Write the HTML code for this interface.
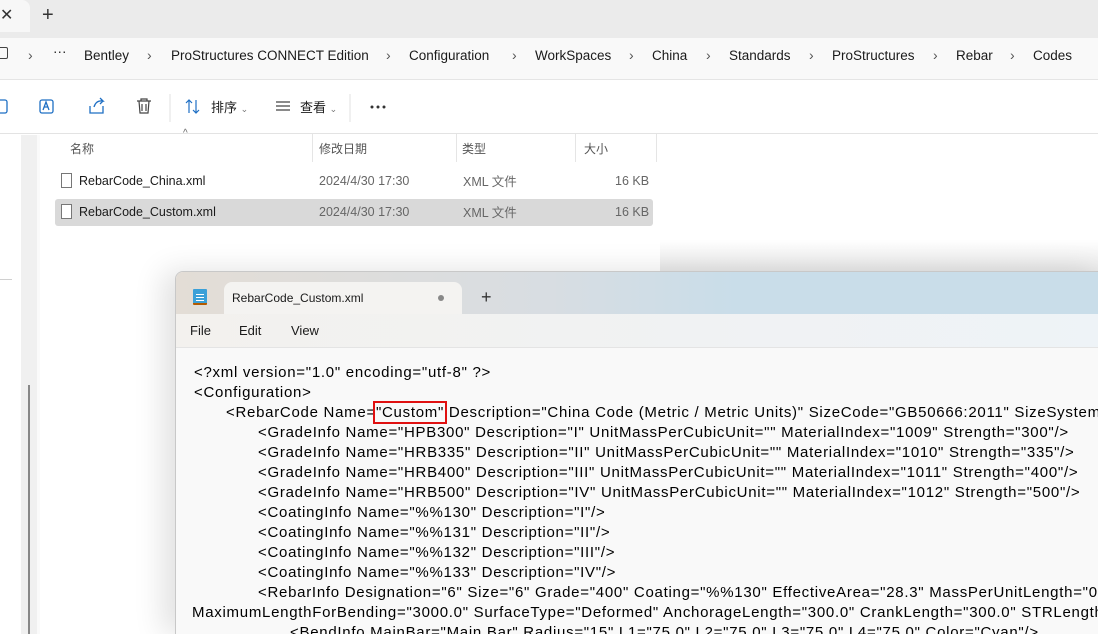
<!DOCTYPE html>
<html><head><meta charset="utf-8"><style>
*{margin:0;padding:0;box-sizing:border-box}
html{width:1098px;height:634px;overflow:hidden}
body{width:1098px;height:634px;overflow:hidden;background:#fff;font-family:"Liberation Sans","Noto Sans CJK SC",sans-serif;position:relative;color:#1a1a1a}
.abs{position:absolute;white-space:nowrap}
.tabstrip{left:0;top:0;width:1098px;height:38px;background:#ebebeb}
.tab{left:0;top:0;width:30px;height:32px;background:#f7f7f7;border-radius:0 8px 0 0}
.addr{left:0;top:38px;width:1098px;height:42px;background:#f9f9f9;border-bottom:1px solid #e5e5e5}
.crumb{top:48px;font-size:13.5px;color:#1a1a1a}
.sep{top:47px;font-size:14px;color:#555}
.tool{top:80px;left:0;width:1098px;height:54px;background:#fff;border-bottom:1px solid #e3e3e3}
.hdr{top:140px;font-size:12px;color:#555}
.row{font-size:12.5px}
.np{left:175px;top:271px;width:930px;height:363px;border:1px solid #c8c8c8;border-bottom:none;border-radius:8px 0 0 0;overflow:hidden;box-shadow:-12px 0 30px rgba(0,0,0,0.12);background:#f9f9f9}
.title{left:0;top:0;width:930px;height:42px;background:linear-gradient(90deg,#e3ddd6 0%,#d8dde2 40%,#c9dde9 60%,#c9dde9 100%)}
.menu{left:0;top:42px;width:930px;height:34px;background:linear-gradient(90deg,#f3f1ee,#eef3f7);border-bottom:1px solid #e4e4e4}
.ntab{left:48px;top:10px;width:238px;height:32px;background:#f4f3f1;border-radius:8px 8px 0 0}
.code{left:18px;top:91px;font-size:15px;line-height:20px;color:#000;letter-spacing:0.72px}
.code div{white-space:nowrap}
</style></head><body>
<div class="abs tabstrip"></div>
<div class="abs tab"></div>
<div class="abs" style="left:0;top:5px;font-size:16px;color:#333">✕</div>
<div class="abs" style="left:42px;top:4px;font-size:20px;color:#333;font-weight:300">+</div>
<div class="abs addr"></div>
<div class="abs" style="left:-6px;top:47px;width:14px;height:12px;border:1.5px solid #444;border-radius:2px"></div>
<div class="abs sep" style="left:28px">›</div>
<div class="abs crumb" style="left:53px;top:44px">···</div>
<div class="abs crumb" style="left:84px">Bentley</div>
<div class="abs sep" style="left:147px">›</div>
<div class="abs crumb" style="left:171px">ProStructures CONNECT Edition</div>
<div class="abs sep" style="left:386px">›</div>
<div class="abs crumb" style="left:409px">Configuration</div>
<div class="abs sep" style="left:512px">›</div>
<div class="abs crumb" style="left:535px">WorkSpaces</div>
<div class="abs sep" style="left:629px">›</div>
<div class="abs crumb" style="left:652px">China</div>
<div class="abs sep" style="left:706px">›</div>
<div class="abs crumb" style="left:729px">Standards</div>
<div class="abs sep" style="left:809px">›</div>
<div class="abs crumb" style="left:832px">ProStructures</div>
<div class="abs sep" style="left:933px">›</div>
<div class="abs crumb" style="left:956px">Rebar</div>
<div class="abs sep" style="left:1010px">›</div>
<div class="abs crumb" style="left:1033px">Codes</div>
<div class="abs tool"></div>
<svg class="abs" style="left:0;top:92px" width="400" height="30" viewBox="0 0 400 30">
<g fill="none" stroke="#1e6fc4" stroke-width="1.3">
<rect x="-4" y="8" width="11" height="13" rx="2"/>
<rect x="40" y="8" width="13" height="13" rx="2"/>
<path d="M43 18 l3-8 l3 8 M44 15 h4"/>
<path d="M90 14 v7 h13 v-7 M94 15 q2-7 9-6 l-3-3 M103 9 l-3 3"/>
</g>
<g fill="none" stroke="#444" stroke-width="1.2">
<path d="M137 9 h14 M141 9 v-2 h6 v2 M139 9 l1 12 h8 l1-12 M142 12 v7 M146 12 v7"/>
<path d="M189 8 v13 M186 11 l3-3 l3 3 M196 8 v13 M193 18 l3 3 l3-3" stroke="#1e6fc4"/>
<path d="M276 10 h14 M276 14 h14 M276 18 h14"/>
</g>
<line x1="170" y1="2" x2="170" y2="30" stroke="#e0e0e0"/>
<line x1="350" y1="2" x2="350" y2="30" stroke="#e0e0e0"/>
<circle cx="372" cy="15" r="1.5" fill="#333"/><circle cx="378" cy="15" r="1.5" fill="#333"/><circle cx="384" cy="15" r="1.5" fill="#333"/>
</svg>
<div class="abs" style="left:211px;top:97px;font-size:13px">排序 <span style="font-size:9px;color:#777">⌄</span></div>
<div class="abs" style="left:300px;top:97px;font-size:13px">查看 <span style="font-size:9px;color:#777">⌄</span></div>
<div class="abs" style="left:0;top:135px;width:22px;height:500px;background:#fff"></div>
<div class="abs" style="left:0;top:279px;width:12px;height:1px;background:#d0d0d0"></div>
<div class="abs" style="left:21px;top:135px;width:16px;height:500px;background:#f0f0f0"></div>
<div class="abs" style="left:28px;top:385px;width:2px;height:250px;background:#888"></div>
<div class="abs" style="left:37px;top:135px;width:3px;height:500px;background:#fafafa"></div>
<div class="abs" style="left:183px;top:128px;font-size:10px;color:#666">^</div>
<div class="abs hdr" style="left:70px">名称</div>
<div class="abs hdr" style="left:319px">修改日期</div>
<div class="abs hdr" style="left:462px">类型</div>
<div class="abs hdr" style="left:584px">大小</div>
<div class="abs" style="left:312px;top:134px;width:1px;height:28px;background:#e5e5e5"></div>
<div class="abs" style="left:456px;top:134px;width:1px;height:28px;background:#e5e5e5"></div>
<div class="abs" style="left:575px;top:134px;width:1px;height:28px;background:#e5e5e5"></div>
<div class="abs" style="left:656px;top:134px;width:1px;height:28px;background:#e5e5e5"></div>
<div class="abs" style="left:55px;top:199px;width:598px;height:27px;background:#d9d9d9;border-radius:3px"></div>
<div class="abs" style="left:61px;top:173px;width:11px;height:15px;border:1px solid #777;background:#fff"></div>
<div class="abs" style="left:61px;top:204px;width:11px;height:15px;border:1px solid #777;background:#fff"></div>
<div class="abs row" style="left:79px;top:174px">RebarCode_China.xml</div>
<div class="abs row" style="left:79px;top:205px">RebarCode_Custom.xml</div>
<div class="abs row" style="left:319px;top:174px;color:#666">2024/4/30 17:30</div>
<div class="abs row" style="left:319px;top:205px;color:#666">2024/4/30 17:30</div>
<div class="abs row" style="left:463px;top:171px;color:#666">XML 文件</div>
<div class="abs row" style="left:463px;top:202px;color:#666">XML 文件</div>
<div class="abs row" style="left:615px;top:174px;color:#666">16 KB</div>
<div class="abs row" style="left:615px;top:205px;color:#666">16 KB</div>
<div class="abs" style="left:660px;top:240px;width:440px;height:32px;background:linear-gradient(#fff,#e8e8e8)"></div>

<div class="abs np">
 <div class="abs title"></div>
 <div class="abs ntab"></div>
 <div class="abs" style="left:17px;top:17px;width:14px;height:16px;background:#3aa0d8;border-bottom:2px solid #b35a00;border-radius:1px"></div>
 <div class="abs" style="left:20px;top:22px;width:8px;height:1px;background:#fff;box-shadow:0 3px 0 #fff,0 6px 0 #fff"></div>
 <div class="abs" style="left:56px;top:19px;font-size:12px">RebarCode_Custom.xml</div>
 <div class="abs" style="left:262px;top:23px;width:6px;height:6px;border-radius:50%;background:#888"></div>
 <div class="abs" style="left:305px;top:15px;font-size:18px;color:#333">+</div>
 <div class="abs menu"></div>
 <div class="abs" style="left:14px;top:51px;font-size:13px">File</div>
 <div class="abs" style="left:63px;top:51px;font-size:13px">Edit</div>
 <div class="abs" style="left:115px;top:51px;font-size:13px">View</div>
 <div class="abs code">
  <div>&lt;?xml version="1.0" encoding="utf-8" ?&gt;</div>
  <div>&lt;Configuration&gt;</div>
  <div style="padding-left:32px">&lt;RebarCode Name=<span style="outline:2.5px solid #e01010;outline-offset:1px">"Custom"</span> Description="China Code (Metric / Metric Units)" SizeCode="GB50666:2011" SizeSystem="</div>
  <div style="padding-left:64px">&lt;GradeInfo Name="HPB300" Description="I" UnitMassPerCubicUnit="" MaterialIndex="1009" Strength="300"/&gt;</div>
  <div style="padding-left:64px">&lt;GradeInfo Name="HRB335" Description="II" UnitMassPerCubicUnit="" MaterialIndex="1010" Strength="335"/&gt;</div>
  <div style="padding-left:64px">&lt;GradeInfo Name="HRB400" Description="III" UnitMassPerCubicUnit="" MaterialIndex="1011" Strength="400"/&gt;</div>
  <div style="padding-left:64px">&lt;GradeInfo Name="HRB500" Description="IV" UnitMassPerCubicUnit="" MaterialIndex="1012" Strength="500"/&gt;</div>
  <div style="padding-left:64px">&lt;CoatingInfo Name="%%130" Description="I"/&gt;</div>
  <div style="padding-left:64px">&lt;CoatingInfo Name="%%131" Description="II"/&gt;</div>
  <div style="padding-left:64px">&lt;CoatingInfo Name="%%132" Description="III"/&gt;</div>
  <div style="padding-left:64px">&lt;CoatingInfo Name="%%133" Description="IV"/&gt;</div>
  <div style="padding-left:64px">&lt;RebarInfo Designation="6" Size="6" Grade="400" Coating="%%130" EffectiveArea="28.3" MassPerUnitLength="0.</div>
  <div style="margin-left:-2px">MaximumLengthForBending="3000.0" SurfaceType="Deformed" AnchorageLength="300.0" CrankLength="300.0" STRLength</div>
  <div style="padding-left:96px">&lt;BendInfo MainBar="Main Bar" Radius="15" L1="75.0" L2="75.0" L3="75.0" L4="75.0" Color="Cyan"/&gt;</div>
 </div>
</div>
</body></html>
